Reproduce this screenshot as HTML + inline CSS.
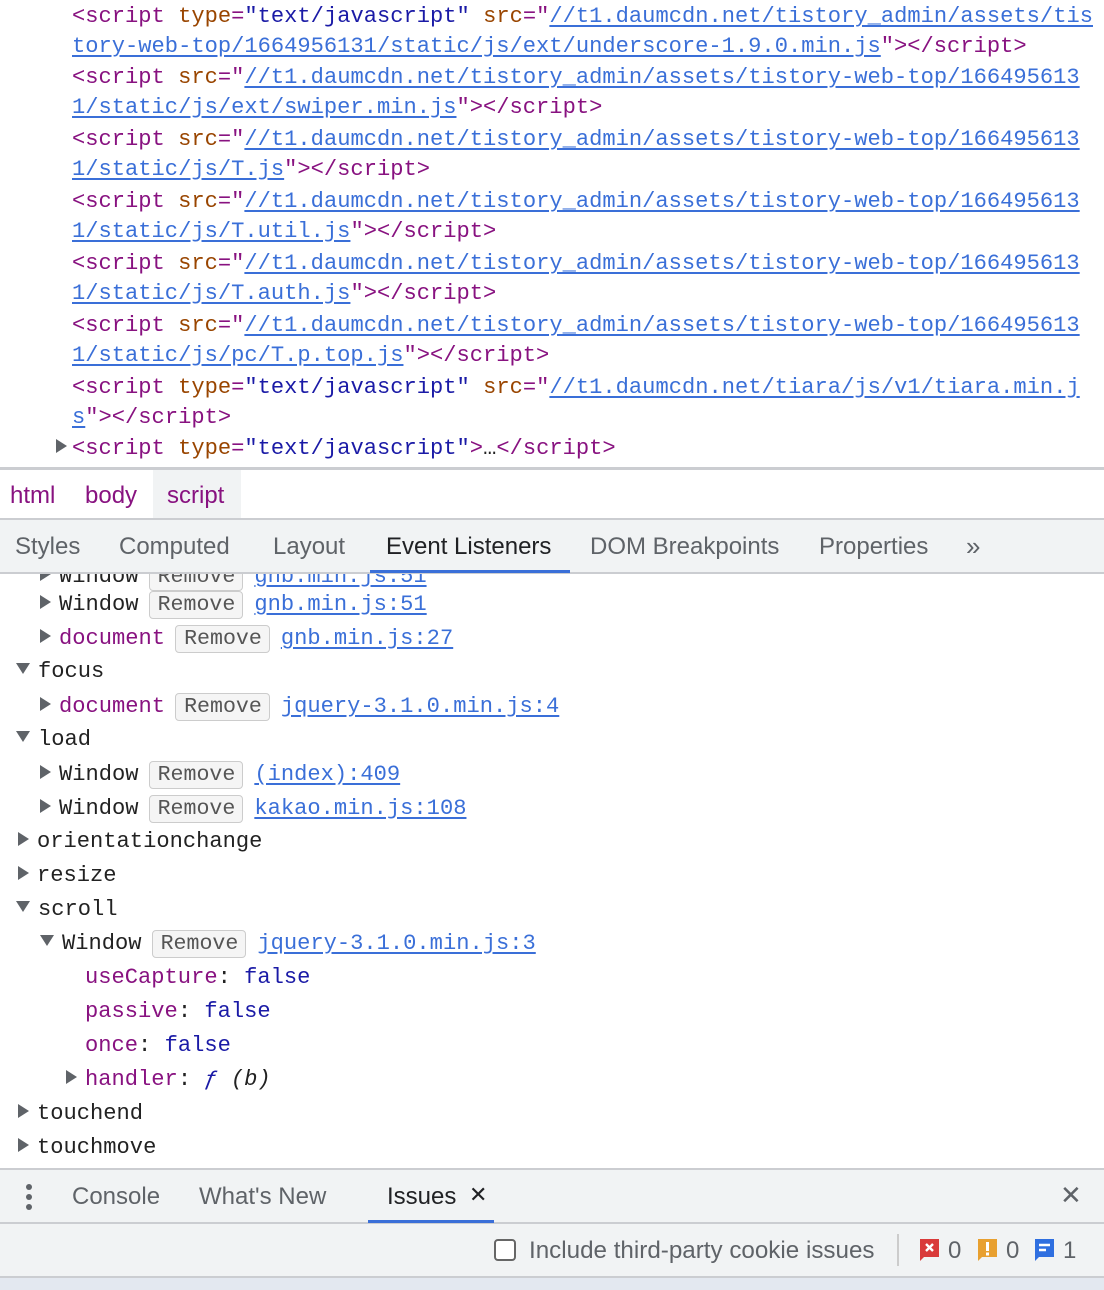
<!DOCTYPE html>
<html><head><meta charset="utf-8"><style>
*{margin:0;padding:0;box-sizing:border-box}
body{width:1104px;height:1290px;position:relative;background:#fff;overflow:hidden;font-family:"Liberation Mono",monospace;font-size:22.1px;color:#222}
.l{position:absolute;white-space:pre;line-height:30px;height:30px}
.t{color:#881280}.a{color:#994500}.v{color:#1a1aa6}
.u{color:#3a6fd8;text-decoration:underline;text-underline-offset:3px}
.tri{display:inline-block;width:0;height:0;border-top:7px solid transparent;border-bottom:7px solid transparent;border-left:11px solid #5f6368;margin-right:8px;vertical-align:1px}
.dn{display:inline-block;width:0;height:0;border-left:7px solid transparent;border-right:7px solid transparent;border-top:11px solid #5f6368;margin-right:8px;vertical-align:3px}
.btn{display:inline-block;border:1.5px solid #ccc;background:#f5f5f5;border-radius:4px;color:#555;line-height:26px;padding:0 7px 0 8px;margin:0 11px 0 10px;font-size:21.6px}
.bar{position:absolute;left:0;width:1104px;background:#f1f3f4;border-bottom:2px solid #cbcdd1}
.tab{position:absolute;font-family:"Liberation Sans",sans-serif;font-size:24px;color:#5f6368;white-space:pre}
</style></head><body>
<div class="l" style="left:72px;top:2px"><span class="t">&lt;script</span> <span class="a">type</span><span class="t">=</span><span class="v">"text/javascript"</span> <span class="a">src</span><span class="t">="</span><span class="u">//t1.daumcdn.net/tistory_admin/assets/tis</span></div>
<div class="l" style="left:72px;top:32px"><span class="u">tory-web-top/1664956131/static/js/ext/underscore-1.9.0.min.js</span><span class="t">"&gt;&lt;/script&gt;</span></div>
<div class="l" style="left:72px;top:63px"><span class="t">&lt;script</span> <span class="a">src</span><span class="t">="</span><span class="u">//t1.daumcdn.net/tistory_admin/assets/tistory-web-top/166495613</span></div>
<div class="l" style="left:72px;top:93px"><span class="u">1/static/js/ext/swiper.min.js</span><span class="t">"&gt;&lt;/script&gt;</span></div>
<div class="l" style="left:72px;top:125px"><span class="t">&lt;script</span> <span class="a">src</span><span class="t">="</span><span class="u">//t1.daumcdn.net/tistory_admin/assets/tistory-web-top/166495613</span></div>
<div class="l" style="left:72px;top:155px"><span class="u">1/static/js/T.js</span><span class="t">"&gt;&lt;/script&gt;</span></div>
<div class="l" style="left:72px;top:187px"><span class="t">&lt;script</span> <span class="a">src</span><span class="t">="</span><span class="u">//t1.daumcdn.net/tistory_admin/assets/tistory-web-top/166495613</span></div>
<div class="l" style="left:72px;top:217px"><span class="u">1/static/js/T.util.js</span><span class="t">"&gt;&lt;/script&gt;</span></div>
<div class="l" style="left:72px;top:249px"><span class="t">&lt;script</span> <span class="a">src</span><span class="t">="</span><span class="u">//t1.daumcdn.net/tistory_admin/assets/tistory-web-top/166495613</span></div>
<div class="l" style="left:72px;top:279px"><span class="u">1/static/js/T.auth.js</span><span class="t">"&gt;&lt;/script&gt;</span></div>
<div class="l" style="left:72px;top:311px"><span class="t">&lt;script</span> <span class="a">src</span><span class="t">="</span><span class="u">//t1.daumcdn.net/tistory_admin/assets/tistory-web-top/166495613</span></div>
<div class="l" style="left:72px;top:341px"><span class="u">1/static/js/pc/T.p.top.js</span><span class="t">"&gt;&lt;/script&gt;</span></div>
<div class="l" style="left:72px;top:373px"><span class="t">&lt;script</span> <span class="a">type</span><span class="t">=</span><span class="v">"text/javascript"</span> <span class="a">src</span><span class="t">="</span><span class="u">//t1.daumcdn.net/tiara/js/v1/tiara.min.j</span></div>
<div class="l" style="left:72px;top:403px"><span class="u">s</span><span class="t">"&gt;&lt;/script&gt;</span></div>
<div class="l" style="left:56px;top:434px"><span class="tri" style="margin-right:5px"></span><span class="t">&lt;script</span> <span class="a">type</span><span class="t">=</span><span class="v">"text/javascript"</span><span class="t">&gt;</span>…<span class="t">&lt;/script&gt;</span></div>

<div style="position:absolute;left:0;top:467px;width:1104px;height:53px;background:#fff;border-top:3px solid #cbcdd1;border-bottom:2px solid #cbcdd1"></div>
<div style="position:absolute;left:153px;top:470px;width:88px;height:48px;background:#f1f3f4"></div>
<div class="tab" style="left:10px;top:482px;color:#881280">html</div>
<div class="tab" style="left:85px;top:482px;color:#881280">body</div>
<div class="tab" style="left:167px;top:482px;color:#881280">script</div>

<div class="bar" style="top:520px;height:54px"></div>
<div class="tab" style="left:15px;top:533px">Styles</div>
<div class="tab" style="left:119px;top:533px">Computed</div>
<div class="tab" style="left:273px;top:533px">Layout</div>
<div class="tab" style="left:386px;top:533px;color:#202124">Event Listeners</div>
<div class="tab" style="left:590px;top:533px">DOM Breakpoints</div>
<div class="tab" style="left:819px;top:533px">Properties</div>
<div class="tab" style="left:966px;top:531px;font-size:26px">»</div>
<div style="position:absolute;left:370px;top:570px;width:200px;height:3px;background:#3a6fd8"></div>

<div class="l" style="left:40px;top:562px;clip-path:inset(12px 0 0 0)"><span class="tri"></span>Window<span class="btn">Remove</span><span class="u">gnb.min.js:51</span></div>
<div class="l" style="left:40px;top:590px"><span class="tri"></span>Window<span class="btn">Remove</span><span class="u">gnb.min.js:51</span></div>
<div class="l" style="left:40px;top:624px"><span class="tri"></span><span class="t">document</span><span class="btn">Remove</span><span class="u">gnb.min.js:27</span></div>
<div class="l" style="left:16px;top:657px"><span class="dn"></span>focus</div>
<div class="l" style="left:40px;top:692px"><span class="tri"></span><span class="t">document</span><span class="btn">Remove</span><span class="u">jquery-3.1.0.min.js:4</span></div>
<div class="l" style="left:16px;top:725px"><span class="dn"></span>load</div>
<div class="l" style="left:40px;top:760px"><span class="tri"></span>Window<span class="btn">Remove</span><span class="u">(index):409</span></div>
<div class="l" style="left:40px;top:794px"><span class="tri"></span>Window<span class="btn">Remove</span><span class="u">kakao.min.js:108</span></div>
<div class="l" style="left:18px;top:827px"><span class="tri"></span>orientationchange</div>
<div class="l" style="left:18px;top:861px"><span class="tri"></span>resize</div>
<div class="l" style="left:16px;top:895px"><span class="dn"></span>scroll</div>
<div class="l" style="left:40px;top:929px"><span class="dn"></span>Window<span class="btn">Remove</span><span class="u">jquery-3.1.0.min.js:3</span></div>
<div class="l" style="left:85px;top:963px"><span class="t">useCapture</span>: <span class="v">false</span></div>
<div class="l" style="left:85px;top:997px"><span class="t">passive</span>: <span class="v">false</span></div>
<div class="l" style="left:85px;top:1031px"><span class="t">once</span>: <span class="v">false</span></div>
<div class="l" style="left:66px;top:1065px"><span class="tri"></span><span class="t">handler</span>: <i class="v">ƒ</i> <i>(b)</i></div>
<div class="l" style="left:18px;top:1099px"><span class="tri"></span>touchend</div>
<div class="l" style="left:18px;top:1133px"><span class="tri"></span>touchmove</div>

<div class="bar" style="top:1168px;height:56px;border-top:2px solid #cbcdd1"></div>
<div style="position:absolute;left:26px;top:1184px;width:6px;height:6px;border-radius:3px;background:#5f6368;box-shadow:0 10px 0 #5f6368,0 20px 0 #5f6368"></div>
<div class="tab" style="left:72px;top:1183px">Console</div>
<div class="tab" style="left:199px;top:1183px">What's New</div>
<div class="tab" style="left:387px;top:1183px;color:#202124">Issues</div>
<div class="tab" style="left:469px;top:1182px;color:#202124;font-size:22px">✕</div>
<div style="position:absolute;left:368px;top:1220px;width:126px;height:3px;background:#3a6fd8"></div>
<div class="tab" style="left:1060px;top:1180px;font-size:26px">✕</div>

<div class="bar" style="top:1224px;height:54px"></div>
<div style="position:absolute;left:494px;top:1239px;width:22px;height:22px;border:2px solid #666;border-radius:4px;background:#fff"></div>
<div class="tab" style="left:529px;top:1237px;font-size:24.2px">Include third-party cookie issues</div>
<div style="position:absolute;left:897px;top:1234px;width:2px;height:32px;background:#ccc"></div>
<svg style="position:absolute;left:918px;top:1237px" width="24" height="26" viewBox="0 0 24 26"><path d="M2 2h19v18H6l-4 4z" fill="#d93a3a"/><path d="M8 7l7 7M15 7l-7 7" stroke="#fff" stroke-width="2.4"/></svg>
<div class="tab" style="left:948px;top:1237px">0</div>
<svg style="position:absolute;left:976px;top:1237px" width="24" height="26" viewBox="0 0 24 26"><path d="M2 2h19v18H6l-4 4z" fill="#e8a030"/><path d="M11.5 5v9" stroke="#fff" stroke-width="3"/><rect x="10" y="15.5" width="3" height="3" fill="#fff"/></svg>
<div class="tab" style="left:1006px;top:1237px">0</div>
<svg style="position:absolute;left:1033px;top:1237px" width="24" height="26" viewBox="0 0 24 26"><path d="M2 2h19v18H6l-4 4z" fill="#2f6fe0"/><path d="M6 8h11M6 13h7" stroke="#fff" stroke-width="2.4"/></svg>
<div class="tab" style="left:1063px;top:1237px">1</div>
<div style="position:absolute;left:0;top:1278px;width:1104px;height:12px;background:#e3e8f0"></div>
</body></html>
